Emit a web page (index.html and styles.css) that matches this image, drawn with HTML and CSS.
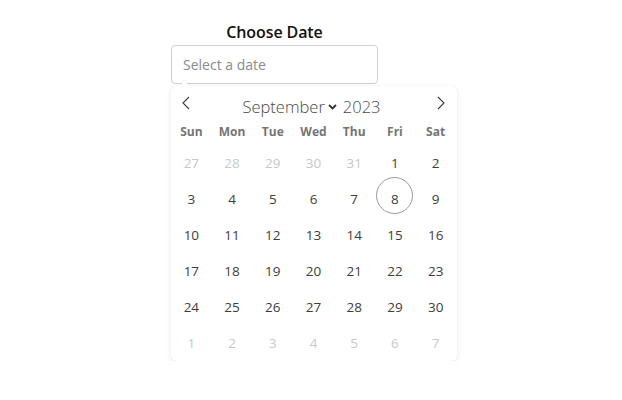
FILE: index.html
```html
<!DOCTYPE html>
<html>

<head>
	<meta name="viewport" content="width=device-width, initial-scale=1.0">
	<meta charset="UTF-8">
	<link rel="stylesheet" href="styles.css">
</head>

<body>
	<div class="picker">
		<h3 class="picker-title">Choose Date</h3>
		<input class="picker-input" type="text" placeholder="Select a date" readonly />

		<div class="calendar">
			<div class="calendar-months">
				<span class="nav prev">
					<svg width="10" height="14" viewBox="0 0 10 14"><path d="M8 1 L2 7 L8 13" fill="none" stroke="#3c3c3c" stroke-width="1.1" /></svg>
				</span>
				<div class="current">
					<span class="month">September</span>
					<svg class="caret" width="9" height="6" viewBox="0 0 9 6"><path d="M1 1 L4.5 4.5 L8 1" fill="none" stroke="#333" stroke-width="1.8" /></svg>
					<span class="year">2023</span>
				</div>
				<span class="nav next">
					<svg width="10" height="14" viewBox="0 0 10 14"><path d="M2 1 L8 7 L2 13" fill="none" stroke="#3c3c3c" stroke-width="1.1" /></svg>
				</span>
			</div>
			<div class="weekdays">
				<span>Sun</span><span>Mon</span><span>Tue</span><span>Wed</span><span>Thu</span><span>Fri</span><span>Sat</span>
			</div>
			<div class="days" id="days"></div>
		</div>
	</div>

	<script>
		// September 2023 starts on a Friday; pad with the tail of August and head of October
		const days = document.getElementById('days');
		const cells = [];
		for (let d = 27; d <= 31; d++) cells.push({ n: d, cls: 'other' });
		for (let d = 1; d <= 30; d++) cells.push({ n: d, cls: d === 8 ? 'today' : '' });
		for (let d = 1; d <= 7; d++) cells.push({ n: d, cls: 'other' });
		days.innerHTML = cells.map(c => `<span class="day ${c.cls}">${c.n}</span>`).join('');
	</script>
</body>

</html>
```

FILE: styles.css
```css
body {
	margin: 0;
	font-family: "Open Sans", "Noto Sans", sans-serif;
	background: #fff;
}

.picker {
	padding: 20px 0 0 171px;
	width: 207px;
}

.picker-title {
	margin: 0 0 1px;
	text-align: center;
	font-size: 16px;
	font-weight: 600;
	line-height: 24px;
	color: #111;
	letter-spacing: -0.1px;
}

.picker-input {
	box-sizing: border-box;
	width: 207px;
	height: 39px;
	border: 1px solid #cfcfcf;
	border-radius: 4px;
	padding: 0 11px;
	font-family: inherit;
	font-size: 14px;
	color: #333;
	outline: none;
}

.picker-input::placeholder {
	color: #8a8a8a;
}

.calendar {
	position: relative;
	box-sizing: border-box;
	width: 286px;
	margin-top: 2px;
	padding: 0 1px 0 0;
	background: #fff;
	border-radius: 5px;
	box-shadow: 0 2px 6px rgba(0, 0, 0, 0.08), 0 0 1px rgba(0, 0, 0, 0.12);
}

/* little notch pointing at the input */
.calendar::before {
	content: "";
	position: absolute;
	left: 10px;
	top: -4px;
	width: 7px;
	height: 7px;
	background: #fff;
	transform: rotate(45deg);
	box-shadow: -1px -1px 1px rgba(0, 0, 0, 0.06);
}

.calendar-months {
	display: flex;
	align-items: center;
	height: 34px;
}

.nav {
	width: 30px;
	display: flex;
	justify-content: center;
	align-items: center;
	height: 32px;
}

.nav.next {
	margin-left: auto;
}

.current {
	flex: 1;
	display: flex;
	align-items: center;
	justify-content: center;
	padding: 7px 4px 0 0;
	color: #4a4a4a;
	font-weight: 300;
	font-size: 16.5px;
}

.caret {
	margin: 0 6px 0 3px;
}

.weekdays {
	display: grid;
	grid-template-columns: repeat(7, 1fr);
	height: 22px;
	align-items: center;
	font-size: 12px;
	font-weight: 700;
	color: #757575;
	text-align: center;
}

.days {
	display: grid;
	grid-template-columns: repeat(7, 1fr);
	grid-auto-rows: 36px;
	padding-top: 3px;
	font-size: 13.5px;
	color: #3d3d3d;
	text-align: center;
}

.day {
	position: relative;
	line-height: 36px;
}

.day.other {
	color: #c8c8c8;
}

.day.today::before {
	content: "";
	position: absolute;
	left: 50%;
	top: -4px;
	width: 35px;
	height: 35px;
	margin-left: -19px;
	border: 1px solid #9a9a9a;
	border-radius: 50%;
}
```
